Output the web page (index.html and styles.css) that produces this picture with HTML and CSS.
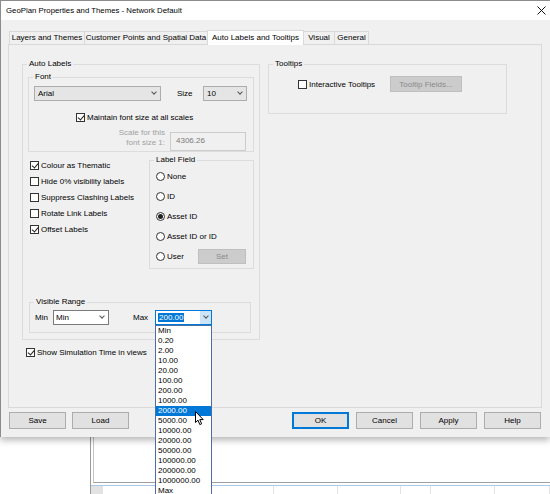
FILE: index.html
```html
<!DOCTYPE html>
<html lang="en">
<head>
    <meta charset="UTF-8">
    <title>GeoPlan Properties and Themes - Network Default</title>
    <link rel="stylesheet" href="styles.css">
</head>
<body>
    <div class="dialog">
        <div class="titlebar">
            <span>GeoPlan Properties and Themes - Network Default</span>
            <svg class="close" width="9" height="9" viewBox="0 0 9 9"><path d="M0.5 0.5L8.5 8.5M8.5 0.5L0.5 8.5" stroke="#111" stroke-width="1"/></svg>
        </div>

        <!-- Tab strip -->
        <div class="tabs">
            <div class="tab tab-layers">Layers and Themes</div>
            <div class="tab tab-customer">Customer Points and Spatial Data</div>
            <div class="tab tab-auto active">Auto Labels and Tooltips</div>
            <div class="tab tab-visual">Visual</div>
            <div class="tab tab-general">General</div>
        </div>

        <div class="tab-page">
            <!-- Left column: auto labels -->
            <div class="left-col">
                <fieldset class="group auto-labels">
                    <legend>Auto Labels</legend>

                    <fieldset class="group font-group">
                        <legend>Font</legend>
                        <div class="font-row">
                            <div class="combo combo-list font-name"><span>Arial</span><span class="chev"></span></div>
                            <span class="size-label">Size</span>
                            <div class="combo combo-list font-size"><span>10</span><span class="chev"></span></div>
                        </div>
                        <div class="check maintain"><span class="box checked"></span>Maintain font size at all scales</div>
                        <div class="scale-row">
                            <div class="scale-label">Scale for this<br>font size 1:</div>
                            <div class="textbox disabled">4306.26</div>
                        </div>
                    </fieldset>

                    <div class="middle">
                        <div class="checks">
                            <div class="check"><span class="box checked"></span>Colour as Thematic</div>
                            <div class="check"><span class="box"></span>Hide 0% visibility labels</div>
                            <div class="check"><span class="box"></span>Suppress Clashing Labels</div>
                            <div class="check"><span class="box"></span>Rotate Link Labels</div>
                            <div class="check"><span class="box checked"></span>Offset Labels</div>
                        </div>
                        <fieldset class="group label-field">
                            <legend>Label Field</legend>
                            <div class="radio-row first"><span class="radio"></span>None</div>
                            <div class="radio-row"><span class="radio"></span>ID</div>
                            <div class="radio-row"><span class="radio on"></span>Asset ID</div>
                            <div class="radio-row"><span class="radio"></span>Asset ID or ID</div>
                            <div class="radio-row"><span class="radio"></span>User<button class="btn btn-set" disabled>Set</button></div>
                        </fieldset>
                    </div>

                    <fieldset class="group visible-range">
                        <legend>Visible Range</legend>
                        <div class="range-row">
                            <span class="range-label">Min</span>
                            <div class="combo combo-edit range-min"><span>Min</span><span class="chev"></span></div>
                            <span class="range-label max-label">Max</span>
                            <div class="combo combo-open range-max">
                                <span class="sel">200.00</span>
                                <span class="combo-btn"><span class="chev"></span></span>
                                <!-- Open drop-down list -->
                                <div class="dropdown">
                                    <div class="item">Min</div>
                                    <div class="item">0.20</div>
                                    <div class="item">2.00</div>
                                    <div class="item">10.00</div>
                                    <div class="item">20.00</div>
                                    <div class="item">100.00</div>
                                    <div class="item">200.00</div>
                                    <div class="item">1000.00</div>
                                    <div class="item hot">2000.00</div>
                                    <div class="item">5000.00</div>
                                    <div class="item">10000.00</div>
                                    <div class="item">20000.00</div>
                                    <div class="item">50000.00</div>
                                    <div class="item">100000.00</div>
                                    <div class="item">200000.00</div>
                                    <div class="item">1000000.00</div>
                                    <div class="item">Max</div>
                                    <svg class="cursor" width="10" height="15" viewBox="0 0 10 15"><path d="M0.5 0.5L0.5 11.5L3 9.2L4.8 13.6L6.6 12.8L4.8 8.6L8.2 8.6Z" fill="#fff" stroke="#000" stroke-width="1" stroke-linejoin="round"/></svg>
                                </div>
                            </div>
                        </div>
                    </fieldset>
                </fieldset>

                <div class="check sim-time"><span class="box checked"></span>Show Simulation Time in views</div>
            </div>

            <!-- Right column: tooltips -->
            <div class="right-col">
                <fieldset class="group tooltips">
                    <legend>Tooltips</legend>
                    <div class="tip-row">
                        <div class="check tip-check"><span class="box"></span>Interactive Tooltips</div>
                        <button class="btn btn-fields" disabled>Tooltip Fields...</button>
                    </div>
                </fieldset>
            </div>
        </div>

        <!-- Dialog buttons -->
        <div class="buttons">
            <div class="button-group">
                <button class="btn">Save</button>
                <button class="btn">Load</button>
            </div>
            <div class="button-group">
                <button class="btn default">OK</button>
                <button class="btn">Cancel</button>
                <button class="btn">Apply</button>
                <button class="btn">Help</button>
            </div>
        </div>
    </div>

    <!-- Application window behind the dialog -->
    <div class="backdrop">
        <div class="frame">
            <div class="frame-body"></div>
            <div class="frame-head">
                <div class="cell corner"></div>
                <div class="cell"></div>
                <div class="cell"></div>
                <div class="cell"></div>
                <div class="cell"></div>
                <div class="cell"></div>
                <div class="cell"></div>
            </div>
        </div>
    </div>
</body>
</html>
```

FILE: styles.css
```css
* {
    box-sizing: border-box;
}
body {
    margin: 0;
    width: 550px;
    height: 494px;
    overflow: hidden;
    background: #fff;
    font-family: "Liberation Sans", Arial, sans-serif;
    font-size: 8px;
    color: #000;
}
.dialog {
    position: relative;
    z-index: 1;
    width: 550px;
    height: 437px;
    background: #f0f0f0;
    border-left: 1px solid #8c8c8c;
    border-top: 1px solid #8c8c8c;
    box-shadow: 0 3px 7px rgba(0, 0, 0, 0.3);
}
.titlebar {
    height: 19px;
    background: #fff;
    display: flex;
    align-items: center;
    justify-content: space-between;
    padding: 0 4px 0 5px;
    font-size: 7.8px;
}
.close {
    display: block;
}

/* tabs */
.tabs {
    display: flex;
    align-items: flex-end;
    height: 14px;
    margin-top: 10px;
    padding-left: 8px;
}
.tab {
    height: 13px;
    line-height: 12px;
    text-align: center;
    border: 1px solid #d9d9d9;
    border-bottom: none;
    margin-left: -1px;
    white-space: nowrap;
}
.tab-layers { width: 76px; margin-left: 0; }
.tab-customer { width: 124px; }
.tab-auto { width: 97px; }
.tab-visual { width: 32px; }
.tab-general { width: 35px; }
.tab.active {
    position: relative;
    z-index: 1;
    height: 15px;
    line-height: 14px;
    margin-bottom: -1px;
    background: #fff;
}
.tab-page {
    display: flex;
    align-items: flex-start;
    margin-left: 7px;
    width: 534px;
    height: 364px;
    border: 1px solid #d9d9d9;
}
.left-col {
    margin: 14px 0 0 13px;
    width: 238px;
}
.right-col {
    margin: 14px 0 0 8px;
    width: 239px;
}

/* group boxes */
.group {
    margin: 0;
    padding: 0;
    min-width: 0;
    border: 1px solid #dcdcdc;
}
.group legend {
    margin-left: 4px;
    padding: 0 2px;
    height: 10px;
    line-height: 10px;
}
.auto-labels {
    height: 281px;
}
.font-group {
    margin: 3px 0 0 5px;
    width: 226px;
    height: 80px;
}
.font-row {
    display: flex;
    align-items: center;
    height: 15px;
    margin: 4px 0 0 5px;
}
.size-label {
    margin-left: 16px;
    width: 26px;
}
.maintain {
    margin: 8px 0 0 47px;
    height: 10px;
}
.scale-row {
    display: flex;
    align-items: flex-start;
    margin-top: 3px;
}
.scale-label {
    width: 136px;
    margin-right: 5px;
    text-align: right;
    line-height: 10px;
    color: #a0a0a0;
}
.textbox {
    margin-top: 4px;
    width: 76px;
    height: 19px;
    padding: 3px 0 0 5px;
    border: 1px solid #cccccc;
}
.textbox.disabled {
    color: #7a7a7a;
    background: #f0f0f0;
}

/* combos */
.combo {
    display: flex;
    align-items: center;
    justify-content: space-between;
    height: 15px;
    padding: 0 4px 0 3px;
    border: 1px solid #adadad;
    background: #fff;
}
.combo-list {
    background: #e5e5e5;
}
.font-name { width: 127px; }
.font-size { width: 44px; }
.combo-edit {
    border-color: #7a7a7a;
    padding-left: 2px;
}
.chev {
    width: 4px;
    height: 4px;
    margin-top: -3px;
    border-right: 1px solid #555;
    border-bottom: 1px solid #555;
    transform: rotate(45deg);
}
.range-row {
    display: flex;
    align-items: center;
    height: 15px;
    margin-top: 3px;
}
.range-label {
    margin-left: 5px;
    width: 18px;
}
.max-label {
    margin-left: 24px;
    width: 22px;
}
.range-min { width: 56px; }
.range-max {
    position: relative;
    width: 57px;
    padding: 0;
    border-color: #0078d7;
}
.sel {
    margin-left: 2px;
    padding: 0 1px;
    line-height: 9px;
    background: #0078d7;
    color: #fff;
}
.combo-btn {
    display: flex;
    align-items: center;
    justify-content: center;
    width: 11px;
    height: 100%;
    background: #cce4f7;
}
.dropdown {
    position: absolute;
    z-index: 5;
    left: -1px;
    top: 14px;
    width: 57px;
    height: 180px;
    background: #fff;
    border: 1px solid #4a6fa5;
}
.item {
    height: 10px;
    line-height: 10px;
    padding-left: 2px;
}
.item.hot {
    background: #0078d7;
    color: #fff;
}
.cursor {
    position: absolute;
    left: 39px;
    top: 85px;
}

/* check boxes and radio buttons */
.check {
    display: flex;
    align-items: center;
    height: 16px;
    white-space: nowrap;
}
.box {
    position: relative;
    flex: none;
    width: 9px;
    height: 9px;
    margin-right: 2px;
    border: 1px solid #333;
    background: #fff;
}
.box.checked::after {
    content: "";
    position: absolute;
    left: 2px;
    top: 0;
    width: 3px;
    height: 5px;
    border-right: 1px solid #222;
    border-bottom: 1px solid #222;
    transform: rotate(40deg);
}
.middle {
    display: flex;
    align-items: flex-start;
    margin-top: 3px;
}
.checks {
    margin: 2px 0 0 7px;
    width: 119px;
}
.label-field {
    width: 105px;
    height: 114px;
}
.radio-row {
    display: flex;
    align-items: center;
    height: 20px;
    padding-left: 6px;
}
.radio-row.first {
    margin-top: 1px;
}
.radio {
    display: flex;
    align-items: center;
    justify-content: center;
    width: 9px;
    height: 9px;
    margin-right: 2px;
    border: 1px solid #333;
    border-radius: 50%;
    background: #fff;
}
.radio.on::after {
    content: "";
    width: 5px;
    height: 5px;
    border-radius: 50%;
    background: #222;
}
.visible-range {
    margin: 28px 0 0 6px;
    width: 222px;
    height: 36px;
}
.sim-time {
    margin: 7px 0 0 4px;
    height: 10px;
}
.tooltips {
    height: 55px;
}
.tip-row {
    display: flex;
    align-items: center;
    height: 16px;
    margin-top: 7px;
}
.tip-check {
    margin-left: 29px;
    width: 92px;
}

/* buttons */
.btn {
    height: 17px;
    width: 57px;
    padding: 0;
    font-family: inherit;
    font-size: 8px;
    color: #000;
    background: #e1e1e1;
    border: 1px solid #adadad;
}
.btn:disabled {
    background: #cccccc;
    border-color: #bfbfbf;
    color: #8a8a8a;
}
.btn-set {
    margin-left: auto;
    margin-right: 7px;
    width: 48px;
    height: 15px;
}
.btn-fields {
    width: 72px;
    height: 16px;
}
.btn.default {
    border-color: #0078d7;
    box-shadow: inset 0 0 0 1px #0078d7;
}
.buttons {
    display: flex;
    justify-content: space-between;
    margin-top: 4px;
    padding: 0 9px 0 8px;
}
.button-group {
    display: flex;
    gap: 7px;
}
.button-group:first-child {
    gap: 6px;
}

/* window behind */
.backdrop {
    padding-left: 90px;
}
.frame {
    height: 57px;
    border-left: 1px solid #9a9a9a;
}
.frame-body {
    margin-left: 2px;
    height: 46px;
    border-left: 1px solid #c4c4c4;
    border-bottom: 1px solid #a0a0a0;
}
.frame-head {
    display: grid;
    grid-template-columns: 12px 171px 64px 63px 30px 64px 1fr;
    margin-top: 2px;
    height: 9px;
    border-top: 1px solid #a9c9ea;
}
.cell {
    border-right: 1px solid #e3e3e3;
}
.cell.corner {
    background: #e2e2e2;
}
```
